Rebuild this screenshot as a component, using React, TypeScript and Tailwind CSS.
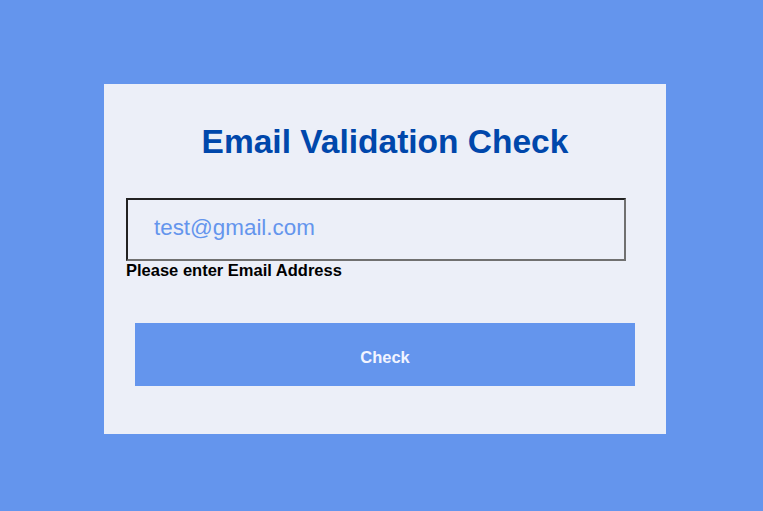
import React, { useState } from 'react'

const EmailCheckCard: React.FC = () => {
    const [email, setEmail] = useState('test@gmail.com')

    return (
        <div className="flex w-[562px] flex-col bg-[#ECEFF8] pt-[38px] pb-[48px]">
            <h1 className="text-center text-[33.5px] font-bold leading-[40px] text-[#0047AB]">
                Email Validation Check
            </h1>
            <div className="mt-[36px] flex flex-col pl-[22px]">
                <input
                    type="text"
                    value={email}
                    onChange={(e) => setEmail(e.target.value)}
                    className="h-[63px] w-[500px] border-2 border-t-[#222222] border-l-[#222222] border-r-[#707070] border-b-[#707070] bg-transparent pb-[3px] pl-[26px] text-[22.4px] text-[#6495ED] outline-none"
                />
                <span className="text-[16.5px] font-bold leading-[18px] text-black">
                    Please enter Email Address
                </span>
            </div>
            <button className="mx-auto mt-[44px] h-[63px] w-[500px] bg-[#6495ED] pt-[6px] text-[16.5px] font-bold text-[#F2F4FF]">
                Check
            </button>
        </div>
    )
}

const App: React.FC = () => {
    return (
        <div
            className="flex h-[511px] w-full items-center justify-center bg-[#6495ED] pt-[7px] pl-[7px]"
            style={{ fontFamily: '"Liberation Sans", Arial, sans-serif' }}
        >
            <EmailCheckCard />
        </div>
    )
}

export default App
